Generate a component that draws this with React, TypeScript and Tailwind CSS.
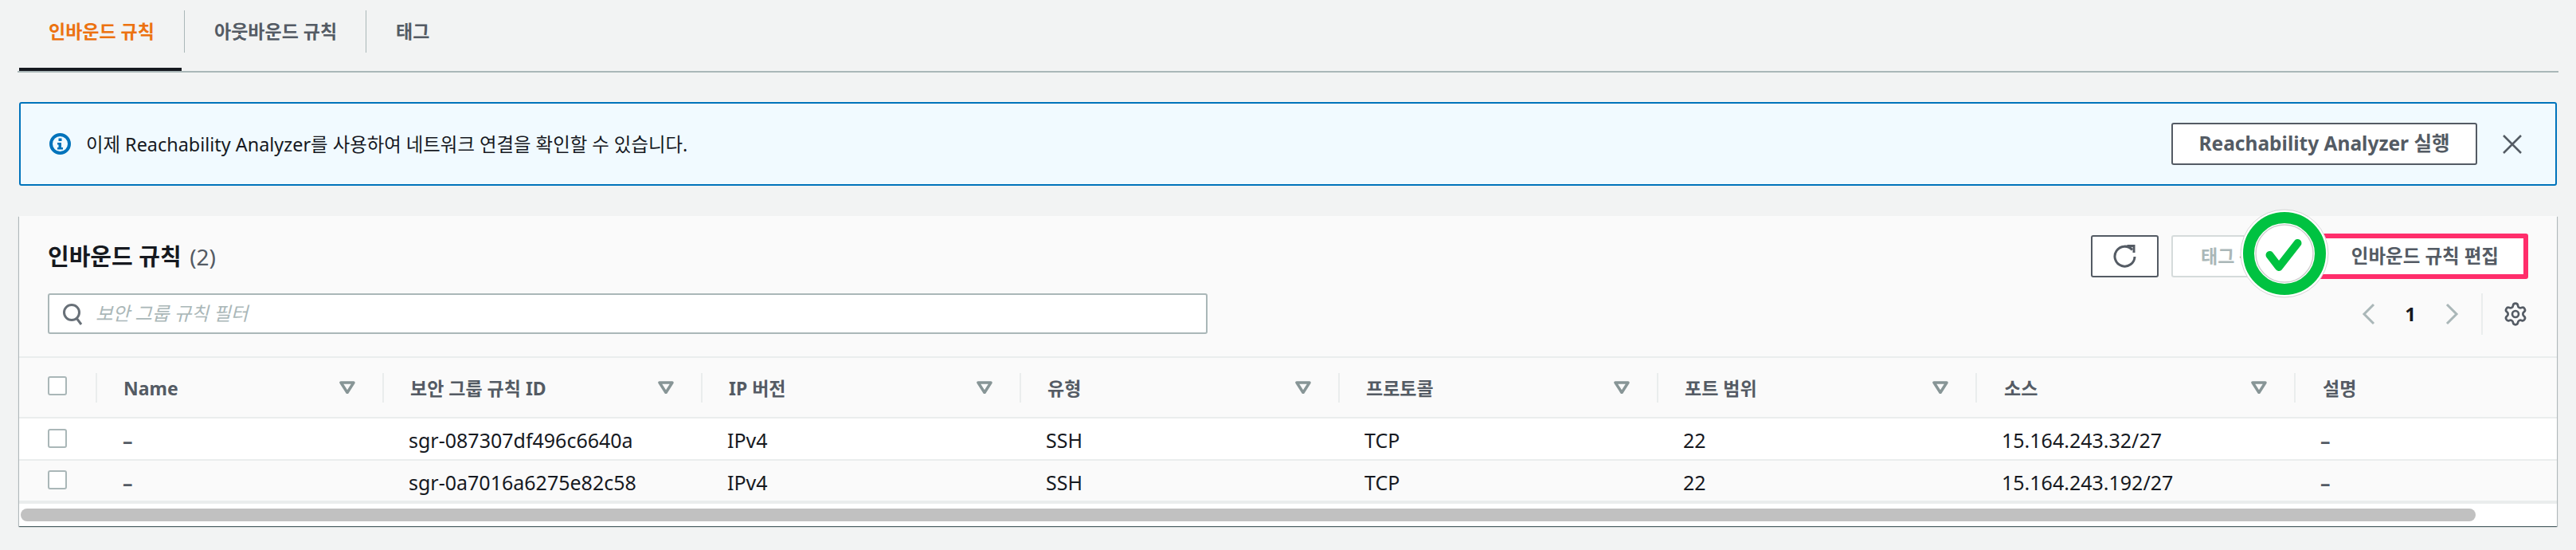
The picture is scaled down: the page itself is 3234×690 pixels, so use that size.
import { Settings } from "lucide-react";

const columns = [
  { label: "Name", pad: "pl-[33px]" },
  { label: "보안 그룹 규칙 ID", pad: "pl-[33px]" },
  { label: "IP 버전", pad: "pl-[33px]" },
  { label: "유형", pad: "pl-[33px]" },
  { label: "프로토콜", pad: "pl-[33px]" },
  { label: "포트 범위", pad: "pl-[33px]" },
  { label: "소스", pad: "pl-[34px]" },
  { label: "설명", pad: "pl-[34px]" },
];

const rows = [
  ["–", "sgr-087307df496c6640a", "IPv4", "SSH", "TCP", "22", "15.164.243.32/27", "–"],
  ["–", "sgr-0a7016a6275e82c58", "IPv4", "SSH", "TCP", "22", "15.164.243.192/27", "–"],
];

const gridCols = "grid grid-cols-[96px_360px_400px_400px_400px_400px_400px_400px_1fr]";

function Checkbox() {
  return <div className="w-[24px] h-[24px] bg-white border-2 border-[#aab7b8] rounded-[3px]" />;
}

function SortCaret() {
  return (
    <svg width="20" height="16" viewBox="0 0 20 16" fill="none">
      <path d="M2 2h16L10 14.500z" stroke="#879596" strokeWidth="3.500" strokeLinejoin="round" />
    </svg>
  );
}

export default function App() {
  return (
    <div className="w-full h-[690px] overflow-hidden bg-[#f2f3f3] px-[24px] font-['Noto_Sans','Noto_Sans_CJK_KR',sans-serif] text-[#16191f]">
      {/* Tabs */}
      <div className="flex h-[91px] -mx-[2px] border-b-[2px] border-[#aab7b8] items-start">
        <div className="relative w-[207px] h-[89px] flex pl-[37px] pt-[23px] ml-[2px]">
          <span className="text-[23px] leading-[32px] font-bold text-[#ec7211]">인바운드 규칙</span>
          <div className="absolute left-0 right-[3px] bottom-0 h-[4px] bg-[#16191f]" />
        </div>
        <div className="w-[228px] h-[53px] mt-[13px] flex pl-[37px] pt-[10px] border-l-[1px] border-[#aab7b8]">
          <span className="text-[23px] leading-[32px] font-bold text-[#545b64]">아웃바운드 규칙</span>
        </div>
        <div className="h-[53px] mt-[13px] flex pl-[37px] pt-[10px] border-l-[1px] border-[#aab7b8]">
          <span className="text-[23px] leading-[32px] font-bold text-[#545b64]">태그</span>
        </div>
      </div>

      {/* Info alert */}
      <div className="mt-[37px] h-[105px] flex items-center justify-between bg-[#f1faff] border-2 border-[#0073bb] rounded-[3px] pl-[36px] pr-[42px]">
        <div className="flex items-center gap-[19px]">
          <svg width="27" height="27" viewBox="0 0 27 27" fill="none">
            <circle cx="13.500" cy="13.500" r="11.500" stroke="#0073bb" strokeWidth="4" />
            <rect x="11.500" y="6.500" width="4" height="3.500" fill="#0073bb" />
            <path d="M10 12h5v6h2v2.500h-7V18h1.500v-3.500H10z" fill="#0073bb" />
          </svg>
          <span className="text-[23.400px] leading-[32px]">이제 Reachability Analyzer를 사용하여 네트워크 연결을 확인할 수 있습니다.</span>
        </div>
        <div className="flex items-center gap-[32px]">
          <button className="h-[53px] w-[384px] flex items-center justify-center bg-white border-2 border-[#545b64] rounded-[3px] text-[24.500px] font-bold text-[#545b64]">
            Reachability Analyzer 실행
          </button>
          <svg width="24" height="24" viewBox="0 0 24 24" fill="none">
            <path d="M1 1l22 22M23 1L1 23" stroke="#545b64" strokeWidth="2.500" />
          </svg>
        </div>
      </div>

      {/* Rules panel */}
      <div className="relative mt-[38px] h-[389px] bg-[#fafafa] shadow-[0_1px_1px_0_rgba(0,28,36,0.5),1px_1px_1px_0_rgba(0,28,36,0.2),-1px_1px_1px_0_rgba(0,28,36,0.2)]">
        <div className="flex justify-between h-[178px] border-b-[2px] border-[#eaeded] pl-[36px] pr-[36px]">
          <div>
            <h2 className="mt-[31px] h-[40px] text-[29px] leading-[40px] font-bold whitespace-nowrap">
              인바운드 규칙 <span className="ml-[3px] text-[28px] font-normal text-[#545b64]">(2)</span>
            </h2>
            <div className="mt-[26px] w-[1456px] h-[51px] flex items-center gap-[16px] bg-white border-2 border-[#aab7b8] rounded-[3px] pl-[16px]">
              <svg width="26" height="28" viewBox="0 0 26 28" fill="none">
                <circle cx="12" cy="12" r="9.500" stroke="#687078" strokeWidth="3" />
                <path d="M18 19l6 8" stroke="#687078" strokeWidth="3" />
              </svg>
              <span className="text-[23.500px] italic text-[#aab7b8]">보안 그룹 규칙 필터</span>
            </div>
          </div>
          <div className="flex flex-col items-end">
            <div className="mt-[22px] flex items-center gap-[16px] h-[57px]">
              <button className="w-[85px] h-[53px] flex items-center justify-center bg-white border-2 border-[#545b64] rounded-[3px]">
                <svg width="32" height="32" viewBox="0 0 32 32" fill="none">
                  <path d="M25 7.500A12.500 12.500 0 1 0 28 16" stroke="#545b64" strokeWidth="3" />
                  <path d="M18.500 2.500h8.500v8.500" stroke="#545b64" strokeWidth="3" />
                </svg>
              </button>
              <button className="w-[154px] h-[53px] flex items-center justify-start pl-[35px] overflow-hidden bg-white border-2 border-[#d5dbdb] rounded-[3px] text-[23px] font-bold text-[#aab7b8] whitespace-nowrap">
                태그 관리
              </button>
              <button className="w-[278px] h-[57px] flex items-center justify-end pr-[31px] bg-white border-[6px] border-[#ff2d6b] rounded-[3px] text-[23.500px] font-bold text-[#545b64] whitespace-nowrap">
                인바운드 규칙 편집
              </button>
            </div>
            <div className="mt-[18px] flex items-center h-[52px]">
              <svg width="18" height="28" viewBox="0 0 18 28" fill="none">
                <path d="M15 2L3 14l12 12" stroke="#aab7b8" strokeWidth="3" />
              </svg>
              <span className="w-[86px] text-center text-[24px] font-bold">1</span>
              <svg width="18" height="28" viewBox="0 0 18 28" fill="none">
                <path d="M3 2l12 12L3 26" stroke="#aab7b8" strokeWidth="3" />
              </svg>
              <div className="ml-[28px] h-[52px] w-[27px] border-l-[2px] border-[#eaeded]" />
              <Settings size={32} strokeWidth={2} color="#545b64" />
            </div>
          </div>
        </div>

        {/* Table head */}
        <div className={`${gridCols} h-[76px] items-center border-b-[2px] border-[#eaeded]`}>
          <div className="pl-[36px] -mt-[4px]">
            <Checkbox />
          </div>
          {columns.map((col, i) => (
            <div
              key={col.label}
              className={`h-[37px] flex items-center justify-between border-l-[2px] border-[#eaeded] ${col.pad} pr-[34px]`}
            >
              <span className="pt-[2px] text-[23px] font-bold text-[#545b64] whitespace-nowrap">{col.label}</span>
              {i < columns.length - 1 && <SortCaret />}
            </div>
          ))}
        </div>

        {/* Table body */}
        {rows.map((row, r) => (
          <div
            key={row[1]}
            className={`${gridCols} items-center ${r === 0 ? "h-[53px] bg-white border-b-[2px]" : "h-[54px] border-b-[4px]"} border-[#eaeded]`}
          >
            <div className="pl-[36px] -mt-[2px]">
              <Checkbox />
            </div>
            {row.map((cell, c) => (
              <div
                key={c}
                className={`${c === 0 ? "pl-[34px]" : "pl-[33px]"} pt-[3px] text-[25px] leading-[34px] whitespace-nowrap ${cell === "–" ? "text-[22px] font-bold text-[#545b64]" : ""}`}
              >
                {cell}
              </div>
            ))}
          </div>
        ))}

        {/* Scrollbar */}
        <div className="h-[28px] bg-white px-[2px] pt-[6px]">
          <div className="h-[16px] w-[3082px] bg-[#c1c1c1] rounded-full" />
        </div>

        {/* Annotation badge */}
        <svg className="absolute left-[2788px] top-[-9px]" width="112" height="112" viewBox="0 0 112 112" fill="none">
          <circle cx="56" cy="56" r="55" fill="#fff" stroke="#d5d5d5" strokeWidth="1" />
          <circle cx="56" cy="56" r="45" stroke="#00c241" strokeWidth="14" />
          <circle cx="56" cy="56" r="36" stroke="#cfcfcf" strokeWidth="1.500" />
          <path d="M37.500 58L49 73l23.500-30" stroke="#00c241" strokeWidth="10" strokeLinecap="round" strokeLinejoin="round" />
        </svg>
      </div>
    </div>
  );
}
